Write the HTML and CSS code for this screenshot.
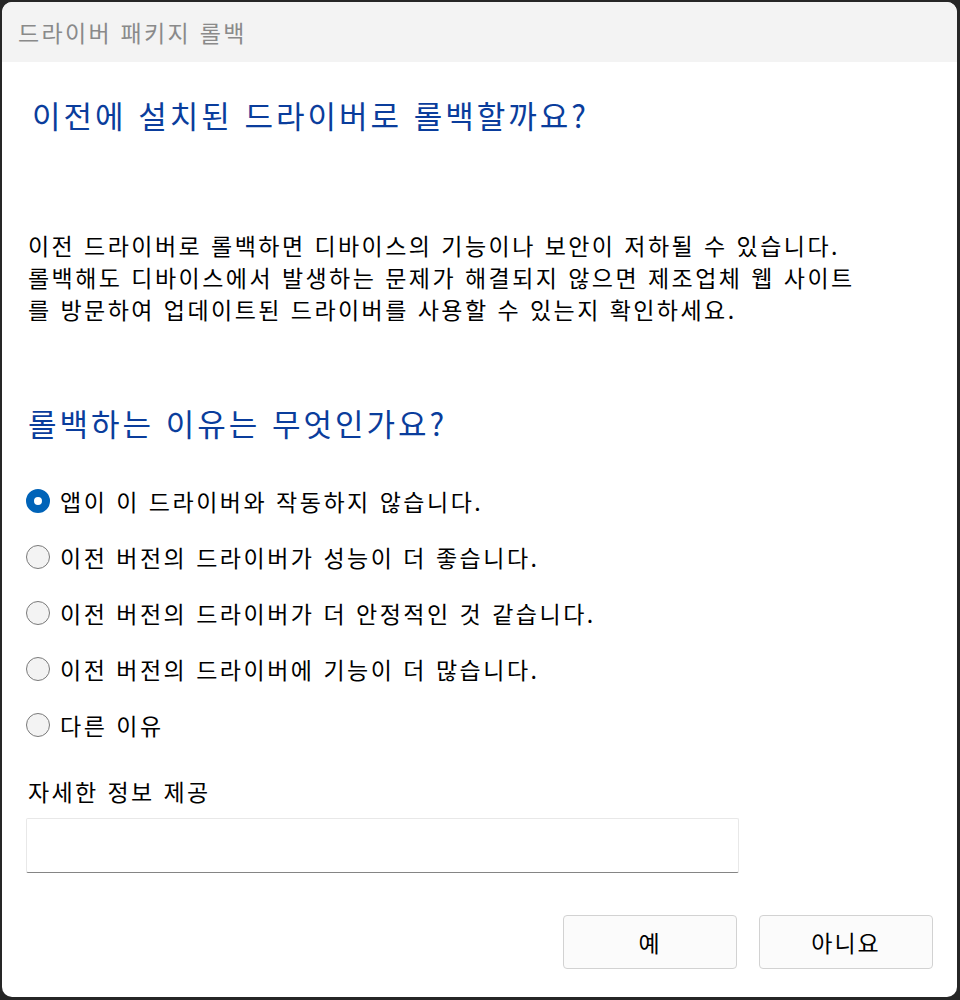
FILE: index.html
```html
<!DOCTYPE html>
<html lang="ko">
<head>
<meta charset="utf-8">
<link rel="stylesheet" href="styles.css">
</head>
<body>
<div class="window">
  <div class="titlebar">드라이버 패키지 롤백</div>
  <div class="content">
    <h1 class="heading">이전에 설치된 드라이버로 롤백할까요?</h1>
    <p class="desc">이전 드라이버로 롤백하면 디바이스의 기능이나 보안이 저하될 수 있습니다.<br>롤백해도 디바이스에서 발생하는 문제가 해결되지 않으면 제조업체 웹 사이트<br>를 방문하여 업데이트된 드라이버를 사용할 수 있는지 확인하세요.</p>
    <h2 class="heading heading2">롤백하는 이유는 무엇인가요?</h2>
    <div class="options">
      <div class="option"><span class="radio checked"></span><span>앱이 이 드라이버와 작동하지 않습니다.</span></div>
      <div class="option"><span class="radio"></span><span>이전 버전의 드라이버가 성능이 더 좋습니다.</span></div>
      <div class="option"><span class="radio"></span><span>이전 버전의 드라이버가 더 안정적인 것 같습니다.</span></div>
      <div class="option"><span class="radio"></span><span>이전 버전의 드라이버에 기능이 더 많습니다.</span></div>
      <div class="option"><span class="radio"></span><span>다른 이유</span></div>
    </div>
    <div class="label">자세한 정보 제공</div>
    <div class="input"></div>
    <div class="buttons">
      <div class="btn">예</div>
      <div class="btn">아니요</div>
    </div>
  </div>
</div>
</body>
</html>
```

FILE: styles.css
```css
html, body {
  margin: 0;
  padding: 0;
  background: #262626;
}
body {
  font-family: "Noto Sans CJK KR", "Noto Sans", sans-serif;
  width: 960px;
  height: 1000px;
  overflow: hidden;
}
.window {
  margin: 2px 3px 3px 2px;
  height: 995px;
  background: #ffffff;
  border-radius: 10px;
  overflow: hidden;
  display: flex;
  flex-direction: column;
}
.titlebar {
  height: 60px;
  flex: none;
  background: #f3f3f3;
  color: #8a8a8a;
  font-size: 23px;
  letter-spacing: 2.3px;
  display: flex;
  align-items: center;
  padding-left: 16px;
}
.content {
  padding: 0 24px 0 24px;
  display: flex;
  flex-direction: column;
}
.heading {
  margin: 33px 0 0 6px;
  font-size: 31px;
  letter-spacing: 3px;
  font-weight: normal;
  line-height: 40px;
  color: #0a3d9c;
}
.heading2 {
  margin: 78px 0 0 2px;
}
.desc {
  margin: 94px 0 0 2px;
  font-size: 23px;
  letter-spacing: 2.45px;
  line-height: 32px;
  color: #000;
}
.options {
  margin-top: 30px;
  display: flex;
  flex-direction: column;
}
.option {
  height: 56px;
  display: flex;
  align-items: center;
  gap: 10px;
  font-size: 23px;
  letter-spacing: 2.5px;
  color: #000;
}
.radio {
  width: 24px;
  height: 24px;
  box-sizing: border-box;
  border-radius: 50%;
  border: 1px solid #7a7a7a;
  background: #f3f3f3;
  flex: none;
}
.radio.checked {
  border: 8px solid #0063b8;
  background: #ffffff;
}
.label {
  margin: 22px 0 0 2px;
  font-size: 23px;
  letter-spacing: 2.4px;
  line-height: 32px;
  color: #000;
}
.input {
  margin-top: 11px;
  width: 713px;
  height: 55px;
  box-sizing: border-box;
  border: 1px solid #e8e8e8;
  border-bottom: 1px solid #858585;
  border-radius: 2px;
  background: #fff;
}
.buttons {
  margin-top: 42px;
  display: flex;
  justify-content: flex-end;
  gap: 22px;
}
.btn {
  width: 174px;
  height: 54px;
  box-sizing: border-box;
  border: 1px solid #d2d2d2;
  border-radius: 4px;
  background: #fbfbfb;
  display: flex;
  align-items: center;
  justify-content: center;
  font-size: 23px;
  letter-spacing: 2px;
  color: #000;
}
```
